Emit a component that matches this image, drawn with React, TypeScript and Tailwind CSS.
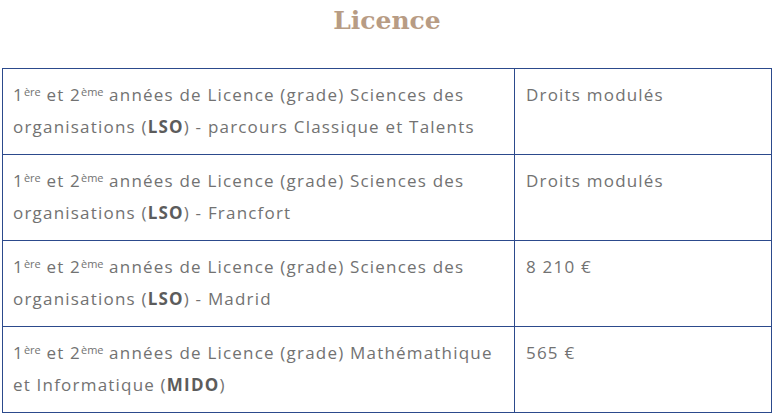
const rows = [
  {
    label: (
      <>
        organisations (<b className="font-bold text-[#5c5c5c]">LSO</b>) - parcours Classique et Talents
      </>
    ),
    title: "Sciences des",
    fee: "Droits modulés",
  },
  {
    label: (
      <>
        organisations (<b className="font-bold text-[#5c5c5c]">LSO</b>) - Francfort
      </>
    ),
    title: "Sciences des",
    fee: "Droits modulés",
  },
  {
    label: (
      <>
        organisations (<b className="font-bold text-[#5c5c5c]">LSO</b>) - Madrid
      </>
    ),
    title: "Sciences des",
    fee: "8 210 €",
  },
  {
    label: (
      <>
        et Informatique (<b className="font-bold text-[#5c5c5c]">MIDO</b>)
      </>
    ),
    title: "Mathémathique",
    fee: "565 €",
  },
];

export default function App() {
  return (
    <div className="h-[414px] w-[774px] overflow-hidden bg-white">
      <h2 className="pt-[4px] text-center font-['DejaVu_Serif',serif] text-[25px] font-bold leading-[34px] text-[#b89c84]">
        Licence
      </h2>
      <div className="mt-[30px] px-[2px]">
        <table className="w-[770px] border-collapse font-['Open_Sans',sans-serif] text-[17px] leading-[32px] tracking-[1.2px] text-[#727272]">
          <tbody>
            {rows.map((r, i) => (
              <tr key={i}>
                <td className="w-[512px] whitespace-nowrap border border-[#2c4a8c] px-[10px] pt-[10px] pb-[11px] align-top">
                  1<sup className="text-[11px] tracking-normal">ère</sup> et 2<sup className="text-[11px] tracking-normal">ème</sup> années de Licence (grade) {r.title}
                  <br />
                  {r.label}
                </td>
                <td className="border border-[#2c4a8c] px-[11px] pt-[10px] align-top">{r.fee}</td>
              </tr>
            ))}
          </tbody>
        </table>
      </div>
    </div>
  );
}
